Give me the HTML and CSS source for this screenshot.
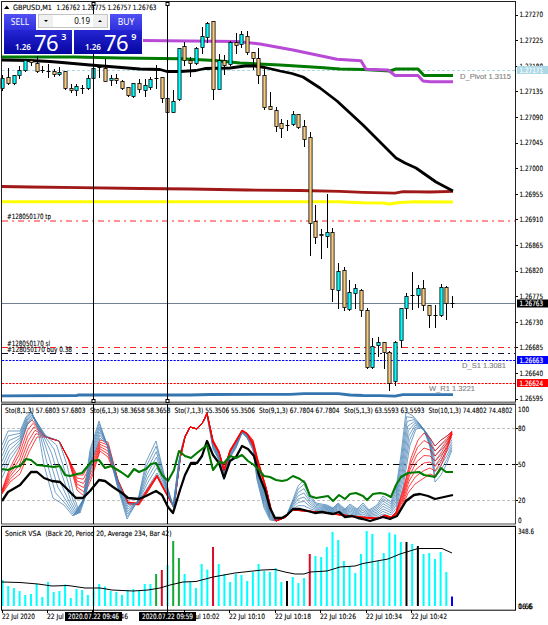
FILE: index.html
```html
<!DOCTYPE html>
<html lang="en">
<head>
    <meta charset="UTF-8">
    <title>GBPUSD,M1</title>
    <link rel="stylesheet" href="styles.css">
</head>
<body>
    <div class="terminal">
        <div class="pane">
            <svg id="price" width="548" height="404" viewBox="0 0 548 404"></svg>
            <div class="trade">
                <div class="trade-top">
                    <div class="tab">SELL</div>
                    <div class="lots">
                        <span class="step"><i class="down"></i></span>
                        <span class="amount">0.19</span>
                        <span class="step"><i class="up"></i></span>
                    </div>
                    <div class="tab">BUY</div>
                </div>
                <div class="trade-bottom">
                    <div class="quote"><span class="small">1.26</span><span class="big">76</span><span class="pip">3</span></div>
                    <div class="quote"><span class="small">1.26</span><span class="big">76</span><span class="pip">9</span></div>
                </div>
            </div>
        </div>
        <svg id="sto" width="548" height="122" viewBox="0 404 548 122"></svg>
        <svg id="vsa" width="548" height="99" viewBox="0 526 548 99"></svg>
    </div>
    <script src="chart.js"></script>
</body>
</html>
```
FILE: styles.css
```css
body {
    margin: 0;
    background: #fff;
    font-family: "Noto Sans", "Open Sans", sans-serif;
}

.terminal {
    display: flex;
    flex-direction: column;
    width: 548px;
    height: 625px;
    overflow: hidden;
}

.pane {
    position: relative;
    height: 404px;
}

svg {
    display: block;
    flex: none;
}

svg text {
    font-family: "DejaVu Sans Condensed", "DejaVu Sans", sans-serif;
    font-size: 7.3px;
    fill: #000;
    stroke: #000;
    stroke-width: 0.12px;
}

svg .pivot {
    font-family: "Liberation Sans", Arial, sans-serif;
    font-size: 8px;
    fill: #808080;
    stroke: #808080;
}

svg .white {
    fill: #fff;
    stroke: #fff;
}

/* one click trading, lies over the chart */
.trade {
    position: absolute;
    left: 4px;
    top: 14px;
    width: 138px;
    height: 40px;
    color: #fff;
    background: #fff;
}

.trade-top {
    display: flex;
    justify-content: space-between;
    height: 16px;
}

.tab {
    width: 32px;
    height: 16px;
    line-height: 16px;
    font-size: 8.5px;
    text-align: center;
    background: linear-gradient(#5050f4, #3030dc);
}

.lots {
    display: flex;
    box-sizing: border-box;
    width: 70px;
    height: 14px;
    border: 1px solid #c4c4c4;
    color: #000;
}

.step {
    display: flex;
    align-items: center;
    justify-content: center;
    width: 14px;
    background: #f0f0f0;
}

.down,
.up {
    border-left: 2px solid transparent;
    border-right: 2px solid transparent;
}

.down {
    border-top: 2px solid #000;
}

.up {
    border-bottom: 2px solid #000;
}

.amount {
    flex: 1;
    padding-right: 3px;
    line-height: 12px;
    font-size: 8px;
    text-align: right;
}

.trade-bottom {
    display: flex;
    gap: 2px;
    height: 24px;
}

.quote {
    display: flex;
    flex: 1;
    align-items: flex-end;
    gap: 3px;
    padding-left: 11px;
    background: linear-gradient(#2525d4, #0505a0);
}

.small {
    line-height: 14px;
    font-size: 8px;
    font-weight: 600;
}

.big {
    line-height: 23px;
    font-size: 22px;
    letter-spacing: -0.4px;
}

.pip {
    align-self: flex-start;
    line-height: 13px;
    font-size: 9px;
    font-weight: 600;
}
```
FILE: chart.js
```js
var NS = 'http://www.w3.org/2000/svg';
var STEP = 5.69;
var price = document.getElementById('price');
var sto = document.getElementById('sto');
var vsa = document.getElementById('vsa');

function add(svg, name, attrs) {
    var el = document.createElementNS(NS, name);
    for (var k in attrs) el.setAttribute(k, attrs[k]);
    svg.appendChild(el);
    return el;
}

function line(svg, x1, y1, x2, y2, color, dash, width) {
    add(svg, 'line', {x1: x1, y1: y1, x2: x2, y2: y2, stroke: color, 'stroke-width': width || 1, 'stroke-dasharray': dash || 'none'});
}

function curve(svg, points, color, width) {
    add(svg, 'polyline', {points: points, fill: 'none', stroke: color, 'stroke-width': width, 'stroke-linejoin': 'round'});
}

function rect(svg, x, y, w, h, fill, stroke) {
    return add(svg, 'rect', {x: x, y: y, width: w, height: h, fill: fill, stroke: stroke || 'none'});
}

function text(svg, x, y, str, width, cls) {
    var t = add(svg, 'text', {x: x, y: y, 'class': cls || ''});
    if (width) {
        t.setAttribute('textLength', width);
        t.setAttribute('lengthAdjust', 'spacingAndGlyphs');
    }
    t.textContent = str;
}

function barX(i) {
    return 2.4 + STEP * i;
}

// high, body top, body bottom, low, type (c = up, t = down, d = doji)
var candles = [
    [75,78,88,90,'c'],[68,77,83,84,'t'],[75,75,83,84,'c'],[66,70,75,78,'c'],[60,60,70,71,'c'],
    [60,60,62,65,'t'],[56,63,71,72,'t'],[66,70,70,72,'d'],[64,71,71,77,'d'],[69,71,74,76,'t'],
    [67,72,74,75,'c'],[71,71,88,89,'t'],[84,88,90,92,'t'],[84,86,90,95,'c'],[85,88,88,93,'d'],
    [75,78,88,89,'c'],[66,68,78,78,'c'],[65,67,67,77,'d'],[59,68,81,81,'t'],[75,78,80,85,'c'],
    [74,78,80,83,'t'],[80,81,88,89,'t'],[87,87,95,96,'t'],[83,83,96,97,'c'],[79,83,89,92,'t'],
    [79,85,90,96,'c'],[77,79,87,89,'c'],[65,78,78,88,'d'],[77,77,98,102,'t'],[97,98,112,112,'t'],
    [90,101,112,112,'c'],[48,48,99,100,'c'],[42,46,60,65,'t'],[57,60,63,76,'t'],[47,48,63,64,'c'],
    [27,36,47,53,'c'],[22,23,37,42,'c'],[21,21,89,99,'t'],[54,60,89,89,'c'],[55,60,65,74,'t'],
    [41,42,64,65,'c'],[33,42,45,53,'t'],[31,34,44,47,'c'],[31,36,52,54,'t'],[52,52,58,69,'t'],
    [48,58,75,83,'t'],[69,75,107,109,'t'],[92,106,109,109,'t'],[107,110,126,131,'t'],[119,123,128,137,'t'],
    [120,125,125,130,'d'],[111,114,124,125,'c'],[114,114,127,128,'t'],[120,126,139,146,'t'],[132,137,223,255,'t'],
    [205,221,237,243,'t'],[229,234,235,258,'t'],[194,232,236,247,'c'],[228,232,289,301,'t'],[263,271,290,308,'c'],
    [267,270,307,310,'t'],[280,292,309,310,'c'],[284,288,293,308,'c'],[289,290,310,316,'t'],[308,310,367,368,'t'],
    [338,346,367,368,'c'],[337,342,345,356,'c'],[342,342,352,368,'t'],[351,352,383,390,'t'],[341,342,381,385,'c'],
    [308,308,340,347,'c'],[293,296,308,318,'c'],[272,295,295,309,'d'],[285,288,295,307,'c'],[280,288,305,310,'t'],
    [305,305,315,327,'t'],[305,315,315,327,'d'],[284,287,315,316,'c'],[286,287,303,319,'t'],[296,303,303,307,'d']
];

// horizontal levels
line(price, 2, 70.5, 515, 70.5, '#add8e6', '3 2');
line(price, 2, 303.5, 515, 303.5, '#708090');
line(price, 2, 221, 515, 221, '#ff7070', '6 4 2 4', 1.6);
line(price, 2, 347.5, 515, 347.5, '#f22', '6 4 2 4');
line(price, 2, 353.5, 515, 353.5, '#101040', '6 4 2 4');
line(price, 2, 360.5, 515, 360.5, '#00f', '2.3 1.2');
line(price, 2, 383.5, 515, 383.5, '#f00', '2.3 1.2');

// moving averages
curve(price, '2,395.8 77,395.5 78,395 190,395 210,394.5 290,394.3 304,393.7 338,393.7 350,395 363,395.5 380,395.7 395,396.2 403,394.7 453,394.7', '#3475b0', 2.8);
curve(price, '2,201.7 338,201.7 363,202.8 383,203 389,204 400,202.5 415,201.7 453,202', '#ff0', 3);
curve(price, '2,186.5 30,187 80,187.7 140,188.5 190,189 247,190 300,190.5 340,191.4 363,192.4 395,193.2 403,191.6 430,192 453,191.3', '#a01818', 2.8);
curve(price, '2,57 75,57 120,58 180,58.8 215,60.5 240,63 280,65 320,67.5 340,69 363,69.5 390,71 396,69 418,69 424,75.5 453,75.5', '#007a00', 3);
curve(price, '143,40.5 237,41.5 260,44 293,50 337,59.3 361,60.8 366,69.3 388,70 395,75.5 418,75.5 423,81 430,81.8 453,81.8', '#b84ad6', 3);
curve(price, '2,60 30,60.5 50,61.5 62,62.5 90,65 115,67 140,69 160,69.5 167,71.5 180,71.5 196,70.5 205,68.5 230,68 245,66 255,66 265,67.5 280,71 292,73.5 303,77 320,88 337,101 363,125 380,142 396,158 405,163 416,168 436,182 453,191', '#000', 2.8);

candles.forEach(function (c, i) {
    var x = Math.round(barX(i)) + 0.5;
    line(price, x, c[0], x, c[3] + 1, '#000');
    if (c[4] === 'd') {
        line(price, x - 2, c[1] + 0.5, x + 2, c[1] + 0.5, '#000');
    } else {
        rect(price, x - 1.6, c[1] + 0.5, 3.2, Math.max(c[2] - c[1], 1), c[4] === 'c' ? '#0ff' : '#f7ca7c', '#000').setAttribute('stroke-width', 0.8);
    }
});

text(price, 460, 78.5, 'D_Pivot 1.3115', 51, 'pivot');
text(price, 462, 368, 'D_S1 1.3081', 44, 'pivot');
text(price, 429, 391, 'W_R1 1.3221', 46, 'pivot');
text(price, 7, 219, '#128050170 tp', 44);
text(price, 7, 346, '#128050170 sl', 43);
text(price, 7, 352, '#128050170 buy 0.38', 65);

// price scale
for (var n = 0; n < 16; n++) {
    var y = 14.5 + n * 25.61;
    line(price, 515, Math.round(y) + 0.5, 518, Math.round(y) + 0.5, '#000');
    text(price, 519.5, y + 2.8, (1.2727 - n * 0.00045).toFixed(5), 23.5);
}
[[70, '#add8e6', '1.27171'], [303.5, '#000', '1.26763'], [360, '#00f', '1.26663'], [383, '#f00', '1.26624']].forEach(function (m) {
    rect(price, 517, m[0] - 4, 31, 8, m[1]);
    text(price, 519.5, m[0] + 2.8, m[2], 23.5, 'white');
});

rect(price, 1.5, 1.5, 514, 400.7, 'none', '#222');
rect(price, 1, 402.5, 515, 1.5, '#999');
[93.5, 167.5].forEach(function (x) {
    line(price, x, 2, x, 402, '#000');
    rect(price, x - 1.5, 2.5, 3, 3, '#fff', '#000');
    rect(price, x - 1.5, 399.5, 3, 3, '#fff', '#000');
});
add(price, 'path', {d: 'M4 9 L6.7 5.5 L9.4 9 Z'});
text(price, 13, 10, 'GBPUSD,M1', 39);
text(price, 56.5, 10, '1.26762 1.26775 1.26757 1.26763', 100);

// stochastic ribbons, every line lies between the fastest and the slowest one
function ribbon(fast, slow, count, color) {
    for (var k = 0; k < count; k++) {
        var t = k / (count - 1);
        var pts = fast.map(function (p, i) {
            return (p[0] + (slow[i][0] - p[0]) * t).toFixed(1) + ',' + (p[1] + (slow[i][1] - p[1]) * t).toFixed(1);
        });
        curve(sto, pts.join(' '), color, 0.75);
    }
}

line(sto, 2, 428.5, 515, 428.5, '#c0c0c0', '3 2');
line(sto, 2, 500.5, 515, 500.5, '#c0c0c0', '3 2');
line(sto, 2, 464.5, 515, 464.5, '#000', '7 4 2 4');

ribbon(
    [[2,490],[9,470],[19,450],[27,425],[32,420],[46,437],[59,441],[70,462],[77,475],[83,475],[92,460],[100,440],[108,442],[118,480],[128,502],[138,503],[148,488],[157,475],[165,490],[174,507],[181,450]],
    [[2,494],[10,482],[20,474],[29,452],[37,437],[46,437],[59,441],[68,458],[77,490],[84,496],[92,477],[100,451],[108,457],[118,482],[128,504],[139,505],[149,490],[157,477],[165,492],[174,508],[181,453]],
    6, '#f00');
ribbon(
    [[2,445],[8,431],[20,431],[26,417],[31,411],[38,430],[44,465],[53,498],[64,505],[73,516],[83,500],[90,450],[99,421],[107,445],[117,485],[127,519],[138,500],[146,462],[156,441],[165,478],[173,506],[179,460]],
    [[2,478],[10,460],[20,445],[28,423],[34,418],[46,436],[59,441],[67,465],[75,500],[80,513],[86,495],[93,458],[100,438],[108,445],[118,481],[128,504],[138,503],[148,487],[157,473],[165,488],[174,508],[181,452]],
    7, '#4682b4');
ribbon(
    [[181,450],[185,436],[190,427],[197,429],[203,422],[207,415],[213,449],[219,460],[224,480],[230,458],[236,448],[242,433],[247,438],[253,450],[257,480],[264,508],[270,520],[276,521],[286,517],[292,502],[298,486],[304,480],[310,495],[316,503],[327,505],[333,508],[338,503],[345,509],[350,504],[357,509],[363,503],[369,510],[377,505],[383,496],[391,502],[396,488],[401,455],[406,412],[413,416],[419,423],[424,430],[430,447],[435,482],[441,475],[447,463],[452,450]],
    [[181,453],[185,437],[190,427],[197,429],[203,422],[207,414],[213,440],[219,455],[224,473],[230,451],[236,442],[242,431],[247,434],[253,443],[257,462],[264,490],[270,512],[276,520],[286,517],[292,511],[298,509],[304,510],[310,511],[316,512],[327,511],[333,513],[338,511],[345,515],[350,514],[357,516],[363,516],[369,518],[377,517],[383,514],[391,517],[396,512],[403,487],[410,445],[416,429],[421,428],[426,432],[430,438],[435,446],[441,440],[447,436],[452,432]],
    8, '#4682b4');
ribbon(
    [[181,453],[185,437],[190,427],[197,429],[203,422],[207,413],[213,440],[219,451],[224,469],[230,450],[236,440],[242,430],[247,433],[253,440],[258,460],[266,487],[271,511],[276,521],[286,517],[292,510],[320,512],[345,515],[363,517],[378,518],[385,515],[391,517],[396,512],[403,490],[411,458],[418,440],[424,433],[430,438],[435,446],[441,440],[447,436],[452,431]],
    [[181,456],[185,437],[190,427],[197,429],[203,422],[207,413],[213,443],[219,453],[224,471],[230,452],[236,442],[242,431],[247,434],[253,446],[259,468],[267,492],[272,512],[276,521],[286,517],[292,510],[320,512],[345,516],[363,518],[378,519],[385,516],[391,518],[396,515],[402,508],[408,493],[415,484],[424,478],[430,474],[435,476],[441,466],[447,450],[452,434]],
    7, '#f00');

curve(sto, '2,501 8,492 20,485 31,472 37,472 44,478 52,481 60,482 68,490 76,498 83,498 90,491 99,480 105,481 113,487 122,493 128,498 139,499 146,496 156,491 162,495 168,507 173,513 180,490 185,475 191,463 197,463 202,456 207,441 213,455 219,463 224,478 230,461 236,457 242,446 248,449 254,456 259,475 265,490 270,508 275,518 282,518 287,515 293,509 300,509 315,513 322,512 333,514 339,512 345,517 352,516 358,518 363,519 370,521 383,517 390,519 397,516 406,501 414,495 420,494 428,496 435,499 444,497 453,495', '#000', 2.3);
curve(sto, '2,469 8,470 15,467 20,466 26,459 31,460 37,465 46,466 54,467 60,466 65,475 70,476 77,474 82,473 92,461 99,460 105,468 111,466 121,472 128,477 134,469 139,472 146,469 151,464 156,463 162,475 168,481 174,470 179,451 185,456 191,458 197,453 202,449 207,445 213,470 219,462 224,463 230,456 236,458 242,455 248,461 254,465 259,470 264,476 270,477 276,480 282,481 287,480 293,476 300,479 305,483 310,496 316,498 328,496 333,501 339,495 345,499 350,494 356,493 363,496 367,500 373,494 380,493 385,494 391,497 396,485 401,477 408,473 419,472 424,475 435,477 441,468 446,472 453,472', '#007a00', 2.1);

[[5, 'Sto(8,1,3) 57.6803 57.6803'], [90, 'Sto(6,1,3) 58.3658 58.3658'], [174.5, 'Sto(7,1,3) 55.3506 55.3506'],
 [259, 'Sto(9,1,3) 67.7804 67.7804'], [344, 'Sto(5,1,3) 63.5593 63.5593'], [428.5, 'Sto(10,1,3) 74.4802 74.4802']].forEach(function (s) {
    text(sto, s[0], 413.2, s[1], s[0] > 400 ? 84 : 80.5);
});
[[411.5, '100'], [431.3, '80'], [467.3, '50'], [503.3, '20'], [523, '0']].forEach(function (s) {
    text(sto, 518, s[0], s[1], s[1].length * 3.7);
});
[428.5, 464.5, 500.5].forEach(function (y) {
    line(sto, 515, y, 518, y, '#000');
});
rect(sto, 1.5, 404.5, 514, 119.5, 'none', '#444');
rect(sto, 1, 524.5, 515, 1.2, '#aaa');

// volume bars, top of every bar
var volumes = [
    580,586,588,591,595,594,584,597,582,592,591,584.5,598,589,590,595,589,584,586.5,591,
    592,595,590,589,591,584,584,574,570,565,541,558,574,582,588,564,569.5,547,564,574,
    582,574,575,581,572,564,571,572,568,582,581,577,583,578,554,556,557,547,532,540,
    561,566,573,554,531,534,561,553,532.5,534.5,542,542,544,546,554,553,559,552,572,596.5
];
var special = {27: '#16a836', 28: '#dc0a28', 30: '#16a836', 31: '#16a836', 37: '#dc0a28', 50: '#000', 54: '#dc0a28', 71: '#000', 73: '#000', 79: '#00f'};
volumes.forEach(function (top, i) {
    rect(vsa, barX(i) - 0.9, top, 2, 606 - top, special[i] || '#0ff');
});
curve(vsa, '2,582 20,582.5 38,584 52,586 68,585.5 85,588 100,588 112,590 133,591 148,590 160,588 170,585 183,582 196,581.5 213,577 235,573 262,570 275,569.5 285,572 295,574 304,574 310,572 327,571 340,567 355,566 363,563.5 388,559 400,554 418,548.5 442,548.5 452,553', '#000', 1);

text(vsa, 5, 535.7, 'SonicR VSA', 36);
text(vsa, 45.5, 535.7, '(Back 20, Period 20, Average 234, Bar 42)', 126);
text(vsa, 518, 534.3, '348.6', 16);
text(vsa, 518, 608.8, '16.6', 14);
text(vsa, 518, 608.8, '0.66', 15);
rect(vsa, 1.5, 526.5, 514, 83.7, 'none', '#000');

// time scale
[[2, '22 Jul 2020', 33], [47, '22 Jul 09:38', 36], [92, '22 Jul 09:46', 36], [184, '22 Jul 10:02', 35.5], [229, '22 Jul 10:10', 36],
 [275, '22 Jul 10:18', 36], [320, '22 Jul 10:26', 36], [366, '22 Jul 10:34', 36], [411, '22 Jul 10:42', 36]].forEach(function (s) {
    line(vsa, s[0] + 0.5, 610, s[0] + 0.5, 613, '#000');
    text(vsa, s[0], 619.3, s[1], s[2]);
});
[[65, '2020.07.22 09:46'], [139, '2020.07.22 09:59']].forEach(function (s) {
    rect(vsa, s[0], 612, 57, 9, '#000');
    text(vsa, s[0] + 3, 619.3, s[1], 51, 'white');
});

[93.5, 167.5].forEach(function (x) {
    line(sto, x, 404, x, 524, '#000');
    line(vsa, x, 526, x, 612, '#000');
});
```
